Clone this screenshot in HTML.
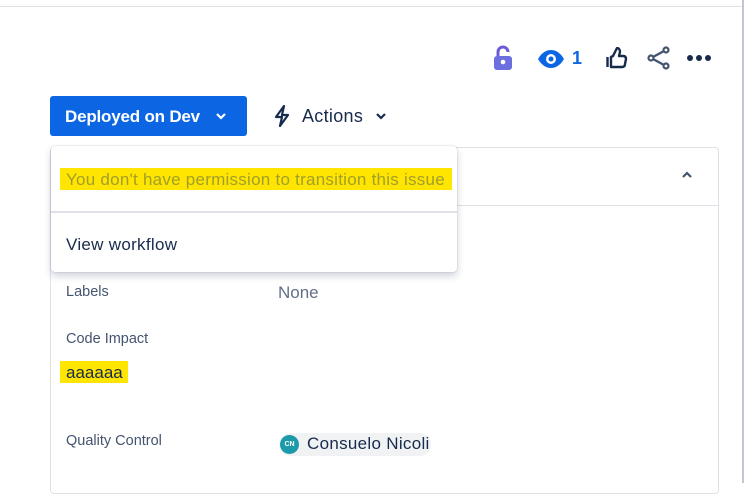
<!DOCTYPE html>
<html><head><style>
body{margin:0;width:745px;height:483px;background:#fff;font-family:"Liberation Sans",sans-serif;position:relative;overflow:hidden;color:#172b4d}
.a{position:absolute}
</style></head><body>
<div class="a" style="left:0;top:6px;width:743px;height:1px;background:#dfe1e6"></div>
<div class="a" style="left:742px;top:0;width:2px;height:483px;background:#c1c7d0"></div>

<svg class="a" style="left:492px;top:45px" width="22" height="26" viewBox="0 0 22 26"><path d="M6 11V7a5 5 0 0 1 10 0" fill="none" stroke="#6b5bd8" stroke-width="3"/><rect x="2" y="11" width="18" height="14" rx="3" fill="#6b6fe0"/><circle cx="11" cy="17" r="2.3" fill="#fff"/></svg>
<svg class="a" style="left:537px;top:50px" width="28" height="18" viewBox="0 0 28 18"><path d="M1 9C5 2 10 0 14 0s9 2 13 9c-4 7-9 9-13 9S5 16 1 9z" fill="#0c66e4"/><circle cx="14" cy="9" r="5" fill="#fff"/><circle cx="14" cy="9" r="2.5" fill="#0c66e4"/></svg>
<div class="a" style="left:572px;top:48px;font-size:18px;color:#0c66e4;font-weight:bold">1</div>
<svg class="a" style="left:606px;top:47px" width="22" height="22" viewBox="0 0 22 22"><path d="M1.5 10v10M5 10v10h11c2 0 3-1 3-3l1-5c0-2-1-3-3-3h-4l1-4c0-2-1-4-3-4L7 9z" fill="none" stroke="#172b4d" stroke-width="2.4" stroke-linejoin="round"/></svg>
<svg class="a" style="left:647px;top:46px" width="24" height="24" viewBox="0 0 24 24"><circle cx="19" cy="4" r="2.5" fill="none" stroke="#44546f" stroke-width="2.2"/><circle cx="4" cy="12" r="2.5" fill="none" stroke="#44546f" stroke-width="2.2"/><circle cx="19" cy="20" r="2.5" fill="none" stroke="#44546f" stroke-width="2.2"/><path d="M6 11l11-6M6 13l11 6" stroke="#44546f" stroke-width="2.4"/></svg>
<svg class="a" style="left:686px;top:54px" width="26" height="8"><circle cx="4" cy="4" r="3" fill="#172b4d"/><circle cx="13" cy="4" r="3" fill="#172b4d"/><circle cx="22" cy="4" r="3" fill="#172b4d"/></svg>

<div class="a" style="left:50px;top:96px;width:197px;height:40px;background:#0c66e4;border-radius:3px"></div>
<div class="a" style="left:65px;top:107px;font-size:17px;font-weight:bold;color:#fff;letter-spacing:-0.2px">Deployed on Dev</div>
<svg class="a" style="left:215px;top:112px" width="12" height="8"><path d="M2 2l4 4 4-4" fill="none" stroke="#fff" stroke-width="2.2"/></svg>
<svg class="a" style="left:273px;top:105px" width="18" height="22" viewBox="0 0 18 22"><path d="M11 1L3 12h6l-2 9 8-11H9z" fill="none" stroke="#172b4d" stroke-width="2.2" stroke-linejoin="round"/></svg>
<div class="a" style="left:302px;top:106px;font-size:18px;color:#172b4d;letter-spacing:0.3px">Actions</div>
<svg class="a" style="left:375px;top:112px" width="12" height="8"><path d="M2 2l4 4 4-4" fill="none" stroke="#172b4d" stroke-width="2.2"/></svg>

<div class="a" style="left:50px;top:147px;width:667px;height:345px;border:1px solid #dfe1e6;border-radius:4px"></div>
<div class="a" style="left:50px;top:205px;width:668px;height:1px;background:#dfe1e6"></div>
<svg class="a" style="left:681px;top:171px" width="12" height="8"><path d="M2 6l4-4 4 4" fill="none" stroke="#44546f" stroke-width="2.2"/></svg>

<div class="a" style="left:66px;top:284px;font-size:14.5px;color:#44546f">Labels</div>
<div class="a" style="left:278px;top:283px;font-size:17px;color:#626f86">None</div>
<div class="a" style="left:66px;top:331px;font-size:14.5px;color:#44546f">Code Impact</div>
<div class="a" style="left:60px;top:361px;width:68px;height:22px;background:#ffe500"></div>
<div class="a" style="left:66px;top:363px;font-size:17px;color:#172b4d">aaaaaa</div>
<div class="a" style="left:66px;top:433px;font-size:14.5px;color:#44546f">Quality Control</div>
<div class="a" style="left:279px;top:433px;width:152px;height:23px;background:#f1f2f4;border-radius:12px"></div>
<div class="a" style="left:280px;top:435px;width:19px;height:19px;border-radius:50%;background:#1d9aaa;color:#fff;font-size:7px;font-weight:bold;text-align:center;line-height:19px">CN</div>
<div class="a" style="left:307px;top:434px;font-size:17px;color:#172b4d;letter-spacing:0.3px">Consuelo Nicoli</div>

<div class="a" style="left:51px;top:146px;width:406px;height:126px;background:#fff;border-radius:4px;box-shadow:0 4px 8px rgba(9,30,66,.2),0 0 1px rgba(9,30,66,.35)"></div>
<div class="a" style="left:60px;top:168px;width:392px;height:22px;background:#ffe500"></div>
<div class="a" style="left:66px;top:170px;font-size:17px;color:#a19f2a;letter-spacing:0.25px">You don't have permission to transition this issue</div>
<div class="a" style="left:51px;top:211px;width:406px;height:2px;background:#dfe1e6"></div>
<div class="a" style="left:66px;top:235px;font-size:17px;color:#172b4d;letter-spacing:0.3px">View workflow</div>
</body></html>
